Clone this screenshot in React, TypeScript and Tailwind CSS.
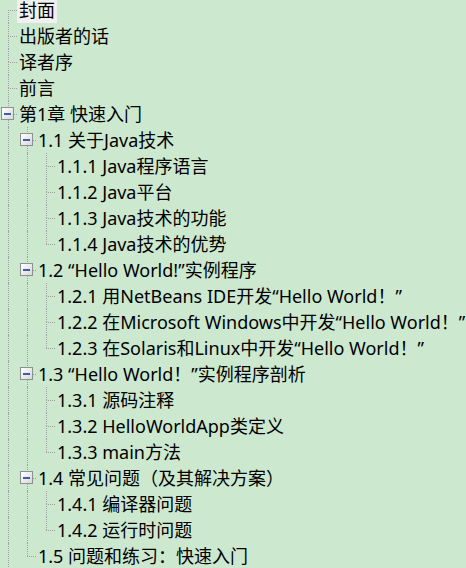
import React from 'react'

type Node = { label: string; children?: Node[] }

const TREE: Node[] = [
  { label: '封面' },
  { label: '出版者的话' },
  { label: '译者序' },
  { label: '前言' },
  {
    label: '第1章 快速入门',
    children: [
      {
        label: '1.1 关于Java技术',
        children: [
          { label: '1.1.1 Java程序语言' },
          { label: '1.1.2 Java平台' },
          { label: '1.1.3 Java技术的功能' },
          { label: '1.1.4 Java技术的优势' },
        ],
      },
      {
        label: '1.2 “Hello World!”实例程序',
        children: [
          { label: '1.2.1 用NetBeans IDE开发“Hello World！”' },
          { label: '1.2.2 在Microsoft Windows中开发“Hello World！”' },
          { label: '1.2.3 在Solaris和Linux中开发“Hello World！”' },
        ],
      },
      {
        label: '1.3 “Hello World！”实例程序剖析',
        children: [
          { label: '1.3.1 源码注释' },
          { label: '1.3.2 HelloWorldApp类定义' },
          { label: '1.3.3 main方法' },
        ],
      },
      {
        label: '1.4 常见问题（及其解决方案）',
        children: [
          { label: '1.4.1 编译器问题' },
          { label: '1.4.2 运行时问题' },
        ],
      },
      { label: '1.5 问题和练习：快速入门' },
    ],
  },
  // 后面还有第2章等，只是被截掉了
  { label: '第2章 面向对象编程概念' },
]

type Row = {
  label: string
  guides: boolean[] // 祖先层是否还有后续兄弟
  last: boolean
  first: boolean
  hasChildren: boolean
}

function flatten(nodes: Node[], guides: boolean[], out: Row[]) {
  nodes.forEach((n, i) => {
    const last = i === nodes.length - 1
    out.push({
      label: n.label,
      guides,
      last,
      first: guides.length === 0 && i === 0,
      hasChildren: !!n.children,
    })
    if (n.children) flatten(n.children, [...guides, !last], out)
  })
  return out
}

const ROWS = flatten(TREE, [], [])

const DOT = 'border-dotted border-[#a0a0a0]'

function ExpandBox() {
  return (
    <span className="absolute left-[1px] top-[6px] flex h-[13px] w-[13px] items-center justify-center border border-[#8e8f8f] bg-gradient-to-br from-white to-[#d8d8d8]">
      <span className="h-[2px] w-[7px] bg-[#3c5fa8]" />
    </span>
  )
}

function TreeRow({ row, selected }: { row: Row; selected: boolean }) {
  return (
    <div className="flex h-[26px] items-stretch whitespace-nowrap">
      {row.guides.map((g, i) => (
        <span key={i} className="w-[19px] shrink-0 pl-[8px]">
          {g && <span className={`block h-full border-l ${DOT}`} />}
        </span>
      ))}
      <span className="relative flex w-[17px] shrink-0 flex-col pl-[8px]">
        <span className={`flex-1 ${row.first ? '' : `border-l ${DOT}`}`} />
        <span className={`flex-1 border-t ${DOT} ${row.last ? '' : 'border-l'}`} />
        {row.hasChildren && <ExpandBox />}
      </span>
      <span
        className={`flex items-center px-[2px] text-[18px] leading-none text-black ${
          selected ? 'bg-[#f0f0f0]' : ''
        }`}
      >
        {row.label}
      </span>
    </div>
  )
}

export default function App() {
  return (
    <div
      className="h-[568px] w-[466px] overflow-hidden bg-[#cce8cf]"
      style={{ fontFamily: '"Noto Sans", "Noto Sans CJK SC", sans-serif' }}
    >
      <div className="-mt-[3px]">
        {ROWS.map((row, i) => (
          <TreeRow key={i} row={row} selected={i === 0} />
        ))}
      </div>
    </div>
  )
}
